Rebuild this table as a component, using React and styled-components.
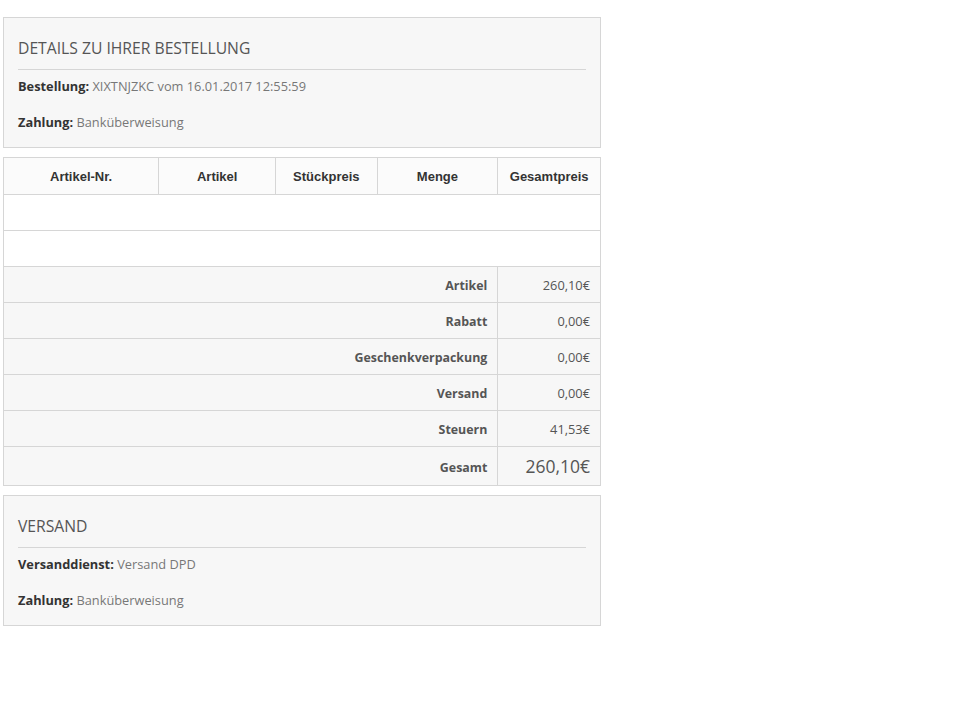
import React from 'react';
import styled, { createGlobalStyle } from 'styled-components';

const GlobalStyle = createGlobalStyle`
  body {
    margin: 0;
    background: #fff;
    font-family: "Open Sans", "Liberation Sans", sans-serif;
    color: #555;
  }
`;

const Page = styled.div`
  width: 598px;
  padding: 17px 0 0 3px;
  display: flex;
  flex-direction: column;
  gap: 9px;
`;

const Panel = styled.div`
  background: #f7f7f7;
  border: 1px solid #d6d6d6;
  padding: 20px 14px 16px;
`;

const PanelTitle = styled.h3`
  margin: 0;
  font-size: 15.7px;
  font-weight: 400;
  line-height: 20px;
  color: #555;
  text-transform: uppercase;
  padding-bottom: 11px;
  border-bottom: 1px solid #d6d6d6;
`;

const InfoLine = styled.p`
  margin: ${(p) => (p.first ? '7px' : '18px')} 0 0;
  font-size: 12.8px;
  line-height: 18px;
  color: #777;
`;

const Label = styled.strong`
  color: #333;
  font-weight: 700;
`;

const Table = styled.table`
  width: 598px;
  border-collapse: collapse;
  border: 1px solid #d6d6d6;
  font-size: 13px;
`;

const HeadCell = styled.th`
  width: ${(p) => p.w}px;
  height: 36px;
  padding: 0;
  background: #fbfbfb;
  border: 1px solid #d6d6d6;
  font-family: "Liberation Sans", Arial, sans-serif;
  font-weight: 700;
  font-size: 13px;
  color: #333;
  text-align: center;
`;

const EmptyCell = styled.td`
  height: 35px;
  padding: 0;
  background: #fff;
  border: 1px solid #d6d6d6;
`;

const SumRow = styled.tr`
  background: #f7f7f7;
`;

const SumLabel = styled.td`
  box-sizing: border-box;
  height: ${(p) => (p.big ? 39 : 36)}px;
  padding: 2px 10px 0 0;
  border: 1px solid #d6d6d6;
  text-align: right;
  font-weight: 700;
  font-size: 12.4px;
  color: #555;
`;

const SumValue = styled.td`
  padding: 0 10px 0 0;
  border: 1px solid #d6d6d6;
  text-align: right;
  color: #555;
  font-size: ${(p) => (p.big ? '17.5px' : '12.8px')};
`;

const columns = [
  { title: 'Artikel-Nr.', w: 156 },
  { title: 'Artikel', w: 117 },
  { title: 'Stückpreis', w: 101 },
  { title: 'Menge', w: 121 },
  { title: 'Gesamtpreis', w: 102 },
];

const sums = [
  ['Artikel', '260,10€'],
  ['Rabatt', '0,00€'],
  ['Geschenkverpackung', '0,00€'],
  ['Versand', '0,00€'],
  ['Steuern', '41,53€'],
];

const App = () => (
  <>
    <GlobalStyle />
    <Page>
      <Panel>
        <PanelTitle>Details zu Ihrer Bestellung</PanelTitle>
        <InfoLine first>
          <Label>Bestellung:</Label> XIXTNJZKC vom 16.01.2017 12:55:59
        </InfoLine>
        <InfoLine>
          <Label>Zahlung:</Label> Banküberweisung
        </InfoLine>
      </Panel>

      <Table>
        <thead>
          <tr>
            {columns.map((c) => (
              <HeadCell key={c.title} w={c.w}>{c.title}</HeadCell>
            ))}
          </tr>
        </thead>
        <tbody>
          <tr><EmptyCell colSpan={5} /></tr>
          <tr><EmptyCell colSpan={5} /></tr>
          {sums.map(([label, value]) => (
            <SumRow key={label}>
              <SumLabel colSpan={4}>{label}</SumLabel>
              <SumValue>{value}</SumValue>
            </SumRow>
          ))}
          <SumRow>
            <SumLabel colSpan={4} big>Gesamt</SumLabel>
            <SumValue big>260,10€</SumValue>
          </SumRow>
        </tbody>
      </Table>

      <Panel>
        <PanelTitle>Versand</PanelTitle>
        <InfoLine first>
          <Label>Versanddienst:</Label> Versand DPD
        </InfoLine>
        <InfoLine>
          <Label>Zahlung:</Label> Banküberweisung
        </InfoLine>
      </Panel>
    </Page>
  </>
);

export default App;
